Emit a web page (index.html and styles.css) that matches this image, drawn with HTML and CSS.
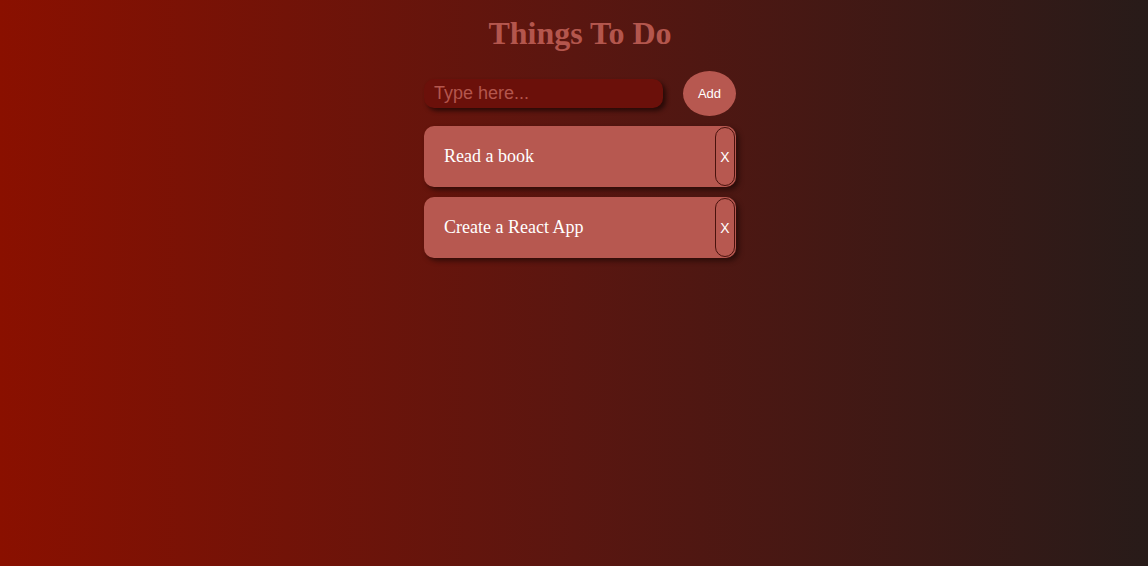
FILE: index.html
```html
<!DOCTYPE html>
<html>
<head>
<meta charset="utf-8">
<link rel="stylesheet" href="styles.css">
</head>
<body>
<div class="app">
  <h1 class="title">Things To Do</h1>
  <div class="form">
    <input class="field" type="text" placeholder="Type here...">
    <button class="add">Add</button>
  </div>
  <ul class="list">
    <li class="item"><span class="text">Read a book</span><button class="del">X</button></li>
    <li class="item"><span class="text">Create a React App</span><button class="del">X</button></li>
  </ul>
</div>
</body>
</html>
```
FILE: styles.css
```css
html, body {
  margin: 0;
  padding: 0;
  height: 100%;
}
body {
  background: linear-gradient(to right, #8a1000 0%, #5a1610 50%, #281b19 100%);
  font-family: "Liberation Serif", serif;
}
.app {
  width: 312px;
  margin: 0 auto;
  padding: 0 0 0 12px;
}
.title {
  margin: 0;
  padding-top: 15px;
  text-align: center;
  font-size: 32px;
  font-weight: bold;
  color: #b4564d;
  line-height: 37px;
}
.form {
  display: flex;
  align-items: center;
  justify-content: space-between;
  margin-top: 19px;
}
.field {
  box-sizing: border-box;
  width: 239px;
  height: 29px;
  border: none;
  border-radius: 10px;
  background: #6b100a;
  box-shadow: 3px 3px 4px rgba(30, 8, 5, 0.8);
  padding: 0 10px;
  font-family: "Liberation Sans", Arial, sans-serif;
  font-size: 18px;
  color: #e8a59d;
  outline: none;
  margin-top: -1px;
}
.field::placeholder {
  color: #b4564d;
}
.add {
  width: 53px;
  height: 45px;
  border: none;
  border-radius: 50%;
  background: #b75850;
  color: #ffffff;
  font-family: "Liberation Sans", Arial, sans-serif;
  font-size: 13px;
  padding: 0;
}
.list {
  list-style: none;
  margin: 10px 0 0;
  padding: 0;
  display: flex;
  flex-direction: column;
  gap: 10px;
}
.item {
  display: flex;
  align-items: stretch;
  justify-content: space-between;
  height: 61px;
  border-radius: 10px;
  background: #b75850;
  box-shadow: 3px 3px 5px rgba(30, 8, 5, 0.7);
}
.text {
  display: flex;
  align-items: center;
  padding-left: 20px;
  font-size: 18px;
  color: #ffffff;
}
.del {
  box-sizing: border-box;
  width: 20px;
  margin: 1px 1px 1px 0;
  border: 1px solid #4a120d;
  border-radius: 10px;
  background: #b75850;
  color: #ffffff;
  font-family: "Liberation Sans", Arial, sans-serif;
  font-size: 14px;
  padding: 0;
}
```
